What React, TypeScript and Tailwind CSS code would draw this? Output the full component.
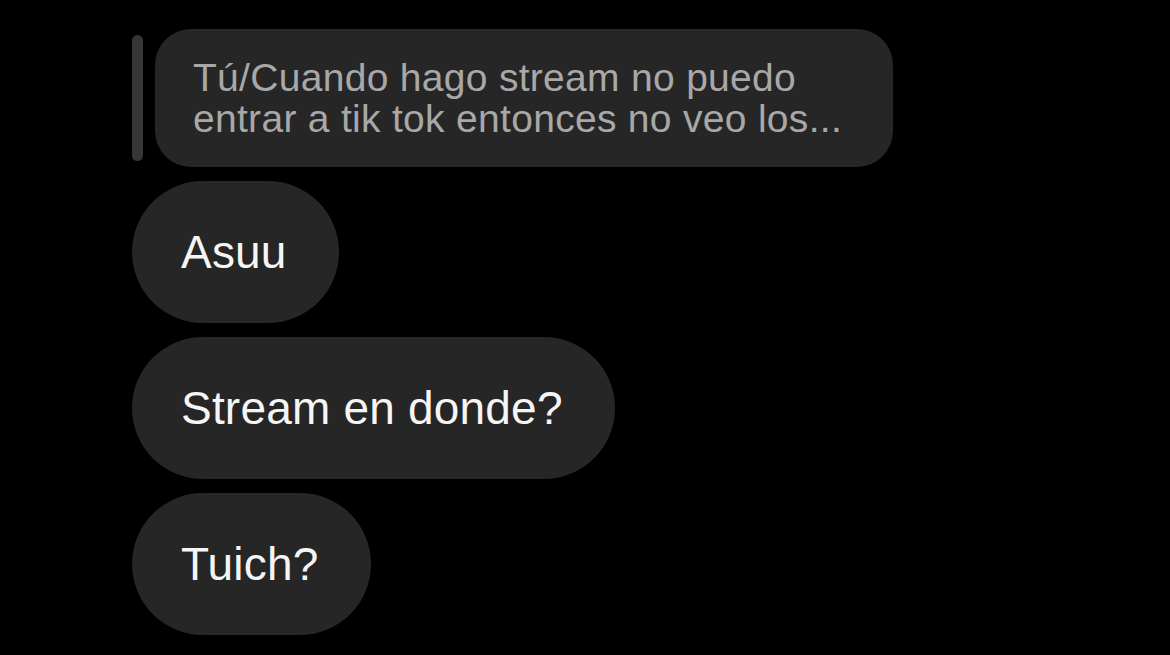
import { ReactNode } from "react";

const font = { fontFamily: '"Liberation Sans", Arial, sans-serif' };

// plain dark grey chat bubble, pill shaped
const Bubble = ({ children }: { children: ReactNode }) => {
  return (
    <div className="flex">
      <div className="flex h-[142px] items-center rounded-full bg-[#262626] pl-[49px] pr-[52px]">
        <span className="text-[46px] leading-[52px] text-[#f5f5f5] tracking-[0.2px]">{children}</span>
      </div>
    </div>
  );
};

// quoted reply ("Tú/...") with the side bar
const ReplyQuote = () => {
  return (
    <div className="flex items-stretch gap-[12px]">
      <div className="my-[6px] w-[11px] rounded-full bg-[#363636]" />
      <div className="w-[738px] rounded-[36px] bg-[#262626] py-[28px] pl-[38px] pr-[30px] text-[39px] leading-[41px] text-[#a8a8a8] tracking-[0.3px]">
        <div className="whitespace-nowrap">Tú/Cuando hago stream no puedo</div>
        <div className="whitespace-nowrap">entrar a tik tok entonces no veo los...</div>
      </div>
    </div>
  );
};

export default function App() {
  const messages = ["Asuu", "Stream en donde?", "Tuich?"];
  return (
    <div className="h-[655px] w-full overflow-hidden bg-black" style={font}>
      <div className="flex flex-col gap-[14px] pl-[132px] pt-[29px]">
        <ReplyQuote />
        {messages.map((m, i) => (
          <Bubble key={i}>{m}</Bubble>
        ))}
      </div>
    </div>
  );
}
